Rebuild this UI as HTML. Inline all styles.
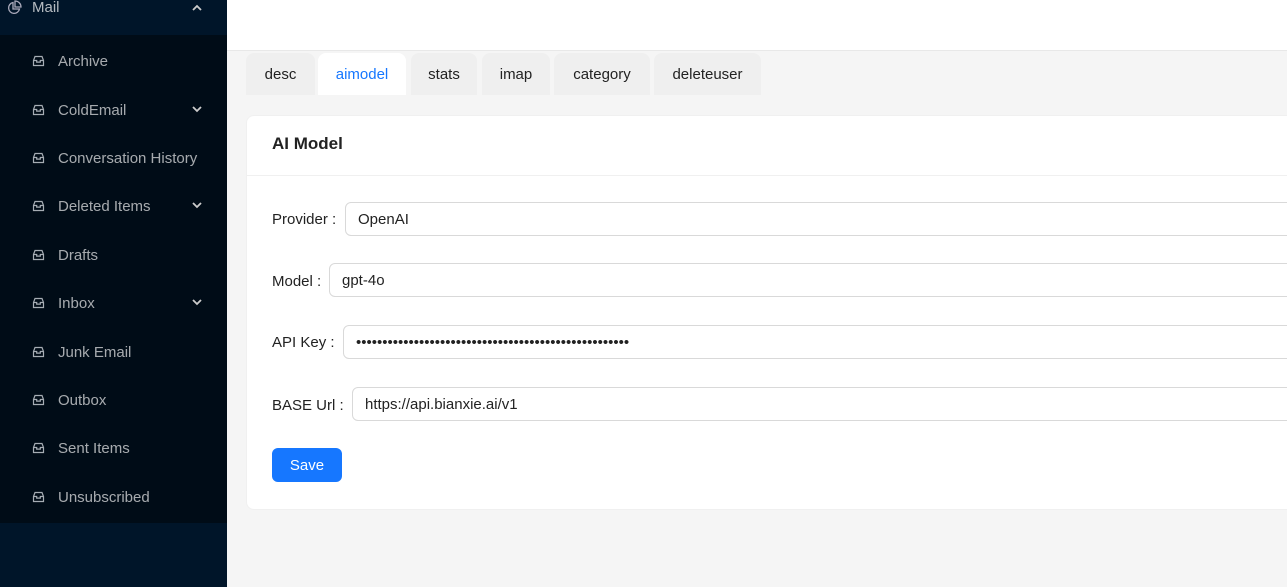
<!DOCTYPE html>
<html><head><meta charset="utf-8"><style>
*{box-sizing:border-box;margin:0;padding:0}
body{width:1287px;height:587px;overflow:hidden;background:#f5f5f5;font-family:"Liberation Sans",sans-serif;font-size:14px;position:relative}
.abs{position:absolute}
.side{left:0;top:0;width:227px;height:587px;background:#001529}
.sub{left:0;top:35px;width:227px;height:488px;background:#000c17}
.mi{position:absolute;left:32px;color:rgba(255,255,255,.65);font-size:15px;height:20px;line-height:20px}
.mi svg{position:absolute;left:0;top:3px}
.mi span{position:absolute;left:26px;white-space:nowrap}
.top{left:227px;top:0;width:1060px;height:51px;background:#fff;border-bottom:1px solid #e8e8e8}
.tab{position:absolute;top:53px;height:42px;background:#efefef;border-radius:8px 8px 0 0;color:#222;font-size:15px;line-height:44px;text-align:center}
.card{left:246px;top:115px;width:1060px;height:395px;background:#fff;border-radius:8px;border:1px solid #f0f0f0}
.lbl{position:absolute;left:272px;color:#222;font-size:15px}
.inp{position:absolute;height:34px;width:1000px;border:1px solid #d9d9d9;border-radius:6px;background:#fff;padding-left:12px;line-height:34px;font-size:15px;color:#222}
</style></head><body>
<div class="abs side"></div>
<div class="abs sub"></div>
<div class="mi" style="left:6px;top:-2px;color:rgba(255,255,255,.7)"><svg width="16" height="16" viewBox="0 0 16 16" fill="none" stroke="#aab" stroke-width="1.3" style="top:2px"><path d="M7 2.5A5.5 5.5 0 1 0 13.5 9H7z"/><path d="M9 1v6h6A6 6 0 0 0 9 1z"/></svg><span style="left:26px">Mail</span></div>
<svg class="abs" style="left:191px;top:4px" width="12" height="8" viewBox="0 0 12 8"><path d="M2 6l4-4 4 4" stroke="#ccc" stroke-width="1.8" fill="none"/></svg>
<div id="items"></div>
<script>
var it=[["Archive",60,0],["ColdEmail",109,1],["Conversation History",157,0],["Deleted Items",205,1],["Drafts",254,0],["Inbox",302,1],["Junk Email",351,0],["Outbox",399,0],["Sent Items",447,0],["Unsubscribed",496,0]];
var h="";it.forEach(function(a){h+='<div class="mi" style="top:'+(a[1]-8)+'px"><svg width="13" height="12" viewBox="0 0 13 12" fill="none" stroke="#a6adb4" stroke-width="1.2"><path d="M1.5 5.5L3 1.5h7l1.5 4v5h-10z"/><path d="M1.5 5.5h3.2v1.6h3.6V5.5h3.2"/></svg><span>'+a[0]+'</span></div>';
if(a[2])h+='<svg class="abs" style="left:191px;top:'+(a[1]-4)+'px" width="12" height="8" viewBox="0 0 12 8"><path d="M2 2l4 4 4-4" stroke="#ccc" stroke-width="1.8" fill="none"/></svg>';});
document.getElementById("items").innerHTML=h;
</script>
<div class="abs top"></div>
<div class="tab" style="left:246px;width:69px">desc</div>
<div class="tab" style="left:318px;width:88px;background:#fff;color:#1677ff">aimodel</div>
<div class="tab" style="left:411px;width:66px">stats</div>
<div class="tab" style="left:482px;width:68px">imap</div>
<div class="tab" style="left:554px;width:96px">category</div>
<div class="tab" style="left:654px;width:107px">deleteuser</div>
<div class="abs card"></div>
<div class="abs" style="left:272px;top:134px;font-size:17px;font-weight:bold;color:#222">AI Model</div>
<div class="abs" style="left:247px;top:175px;width:1040px;height:1px;background:#f0f0f0"></div>
<div class="lbl" style="top:211px">Provider :</div><div class="inp" style="left:345px;top:202px">OpenAI</div>
<div class="lbl" style="top:273px">Model :</div><div class="inp" style="left:329px;top:263px">gpt-4o</div>
<div class="lbl" style="top:334px">API Key :</div><div class="inp" style="left:343px;top:325px;font-size:15px">••••••••••••••••••••••••••••••••••••••••••••••••••••</div>
<div class="lbl" style="top:397px">BASE Url :</div><div class="inp" style="left:352px;top:387px">https://api.bianxie.ai/v1</div>
<div class="abs" style="left:272px;top:448px;width:70px;height:34px;background:#1677ff;border-radius:6px;color:#fff;font-size:15px;line-height:35px;text-align:center">Save</div>
</body></html>
